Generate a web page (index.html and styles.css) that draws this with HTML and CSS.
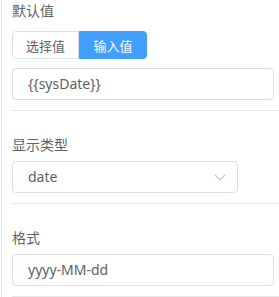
FILE: index.html
```html
<!DOCTYPE html>
<html lang="zh">
<head>
<meta charset="utf-8">
<link rel="stylesheet" href="styles.css">
</head>
<body>
<div class="panel">
  <div class="section first">
    <div class="label">默认值</div>
    <div class="btn-group">
      <button class="btn">选择值</button>
      <button class="btn active">输入值</button>
    </div>
    <div class="input full">{{sysDate}}</div>
  </div>
  <div class="section">
    <div class="label">显示类型</div>
    <div class="input select">
      <span>date</span>
      <svg class="arrow" width="12" height="7" viewBox="0 0 12 7"><path d="M1 1 L6 6 L11 1" fill="none" stroke="#c0c4cc" stroke-width="1.2"/></svg>
    </div>
  </div>
  <div class="section">
    <div class="label">格式</div>
    <div class="input full">yyyy-MM-dd</div>
  </div>
</div>
</body>
</html>
```
FILE: styles.css
```css
* { box-sizing: border-box; }
html, body { margin: 0; padding: 0; background: #fff; }
body {
  font-family: "Noto Sans", "Noto Sans CJK SC", sans-serif;
  font-size: 14px;
  color: #606266;
  width: 279px;
  height: 297px;
  overflow: hidden;
}
.panel {
  margin-left: 1px;
  border-left: 1px solid #e4e7ed;
  padding-left: 10px;
  height: 297px;
}
.section {
  padding-top: 23px;
  padding-bottom: 10px;
  border-bottom: 1px solid #e4e7ed;
}
.section.first { padding-top: 0; }
.label {
  height: 22px;
  line-height: 22px;
  font-size: 14px;
  color: #606266;
}
.first .label + .btn-group { margin-top: 9px; }
.btn-group {
  display: flex;
  width: 135px;
}
.btn {
  width: 67px;
  height: 28px;
  border: 1px solid #dcdfe6;
  background: #fff;
  font-family: inherit;
  font-size: 13px;
  color: #606266;
  padding: 0;
  border-radius: 4px 0 0 4px;
}
.btn.active {
  width: 68px;
  background: #409eff;
  border-color: #409eff;
  color: #fff;
  border-radius: 0 4px 4px 0;
}
.input {
  height: 32px;
  border: 1px solid #dcdfe6;
  border-radius: 4px;
  padding: 0 15px;
  line-height: 30px;
  color: #606266;
  font-size: 14px;
}
.full { margin-right: 5px; }
.first .input { margin-top: 9px; }
.section .label + .input { margin-top: 5px; }
.first .btn-group + .input { margin-top: 9px; }
.select {
  width: 226px;
  display: flex;
  justify-content: space-between;
  align-items: center;
  padding-right: 11px;
}
.arrow { display: block; }
```
